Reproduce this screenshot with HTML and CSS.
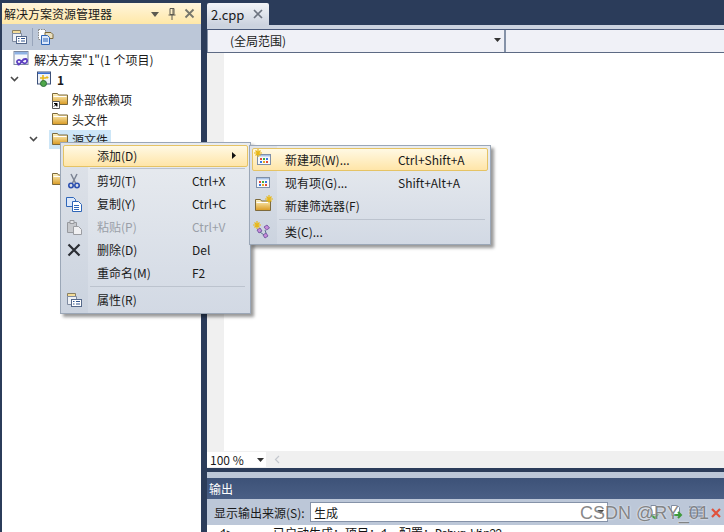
FILE: index.html
```html
<!DOCTYPE html>
<html lang="zh">
<head>
    <meta charset="UTF-8">
    <meta name="viewport" content="width=device-width, initial-scale=1.0">
    <title>解决方案资源管理器</title>
    <link rel="stylesheet" href="styles.css">
</head>
<body>
    <svg class="defs" width="0" height="0">
        <defs>
            <linearGradient id="fold" x1="0" y1="0" x2="0" y2="1">
                <stop offset="0" stop-color="#fff6c8"/>
                <stop offset="1" stop-color="#d99a22"/>
            </linearGradient>
            <symbol id="folder" viewBox="0 0 16 16">
                <path d="M.5 13.500V2.500h5l1 1.500h9v9.500z" fill="url(#fold)" stroke="#7d6a3c"/>
                <path d="M1.500 5.500h13" stroke="#fff" stroke-width="1"/>
            </symbol>
            <symbol id="grid" viewBox="0 0 16 16">
                <rect x="1.500" y="3.500" width="13" height="10" fill="#f8f9fc" stroke="#7e8fa8"/>
                <path d="M2 4h12v1.500H2z" fill="#a9c2e6"/>
                <path d="M4 7h2v2H4z" fill="#e0483c"/><path d="M7 7h2v2H7z" fill="#3fae3f"/><path d="M10 7h2v2h-2z" fill="#3a78e0"/>
                <path d="M4 10h2v2H4z" fill="#3a78e0"/><path d="M7 10h2v2H7z" fill="#e8a822"/><path d="M10 10h2v2h-2z" fill="#e0483c"/>
            </symbol>
            <symbol id="spark" viewBox="0 0 8 8">
                <path d="M4 0v8M0 4h8M1.500 1.500l5 5M6.500 1.500l-5 5" stroke="#e8b818" stroke-width="1.200"/>
            </symbol>
            <symbol id="props" viewBox="0 0 16 16">
                <path d="M1.500 1.500h8v3h-8z" fill="#f3dc9a" stroke="#8a8062"/>
                <path d="M1.500 4.500h9v8h-9z" fill="#eef1f6" stroke="#7f8ba0"/>
                <rect x="5.500" y="7.500" width="10" height="7" fill="#fff" stroke="#56698a"/>
                <path d="M7 9.500h1.500M10 9.500h4M7 12h1.500M10 12h4" stroke="#30548f"/>
            </symbol>
            <symbol id="copy" viewBox="0 0 16 16">
                <path d="M.5 1.500h7l2 2v7h-9z" fill="#dce8fa" stroke="#2f66b8"/>
                <path d="M6.500 5.500h6l3 3v7h-9z" fill="#fff" stroke="#2f66b8"/>
                <path d="M8 9.500h5M8 11.500h5M8 13.500h5" stroke="#2f66b8"/>
            </symbol>
        </defs>
    </svg>

    <div class="workspace">
        <aside class="explorer">
            <div class="explorer-title">
                <span class="explorer-name">解决方案资源管理器</span>
                <span class="title-btns">
                    <svg width="10" height="10" viewBox="0 0 10 10"><path d="M1 3h8L5 8z" fill="#5c5a50"/></svg>
                    <svg width="10" height="14" viewBox="0 0 10 14"><path d="M3 1.500h4v6H3zM1.500 8h7M5 8v5M6 2v5" stroke="#5c5a50" fill="none"/></svg>
                    <svg width="11" height="11" viewBox="0 0 11 11"><path d="M1.500 1.500l8 8M9.500 1.500l-8 8" stroke="#77776c" stroke-width="1.800"/></svg>
                </span>
            </div>
            <div class="explorer-tools">
                <svg class="ic16" viewBox="0 0 16 16"><use href="#props"/></svg>
                <span class="tool-sep"></span>
                <svg class="ic16" viewBox="0 0 16 16">
                    <path d="M.5 .5h7v10h-7z" fill="#fff" stroke="#888" stroke-dasharray="1.500 1"/>
                    <path d="M7 3.500h6l2 2v4H7z" fill="#eadfbe" stroke="#7d6a3c"/>
                    <path d="M3.500 6.500h6l2 2v7h-8z" fill="#dce8fa" stroke="#2f66b8"/>
                    <path d="M5 10h5M5 12h5" stroke="#2f66b8"/>
                </svg>
            </div>
            <div class="tree">
                <div class="tree-row lvl-0">
                    <svg class="ic-sol" viewBox="0 0 18 18">
                        <rect x="1" y="1.500" width="14" height="13" fill="#f6f8fc" stroke="#7c88a0"/>
                        <path d="M1.500 2h13v2.500h-13z" fill="#8fb2e4"/>
                        <path d="M5 13.500c-3-2.500 1-5 3-2.500s5 3.500 6 .5-3-3.500-5-.5-4 5-4 2.500z" fill="none" stroke="#5d3fc0" stroke-width="1.800"/>
                    </svg>
                    <span>解决方案"1"(1 个项目)</span>
                </div>
                <div class="tree-row lvl-1">
                    <svg class="chev" viewBox="0 0 9 6"><path d="M1 1l3.500 3.500L8 1" fill="none" stroke="#4a4a4a" stroke-width="1.600"/></svg>
                    <svg class="ic16" viewBox="0 0 16 16">
                        <rect x="1.500" y="1" width="13" height="12" fill="#eef2f8" stroke="#3c5078"/>
                        <path d="M2 1.500h12V3H2z" fill="#3a6fd0"/>
                        <path d="M7 4v6M4 7h6" stroke="#e8b818" stroke-width="1.600"/>
                        <path d="M11 5v3M9.500 6.500h3" stroke="#e8b818"/>
                        <circle cx="7.500" cy="12.500" r="3" fill="#4fa84a" stroke="#2d6e3a"/>
                    </svg>
                    <b>1</b>
                </div>
                <div class="tree-row lvl-2">
                    <span class="ic-wrap">
                        <svg class="ic16" viewBox="0 0 16 16"><use href="#folder"/></svg>
                        <svg class="shortcut-badge" viewBox="0 0 8 8"><path d="M.5 .5h7v7h-7z" fill="#fff" stroke="#555"/><path d="M2.500 6V3h3M2.500 3l3 3" stroke="#000" transform="rotate(90 4 4)"/></svg>
                    </span>
                    <span>外部依赖项</span>
                </div>
                <div class="tree-row lvl-2">
                    <svg class="ic16" viewBox="0 0 16 16"><use href="#folder"/></svg>
                    <span>头文件</span>
                </div>
                <div class="tree-row lvl-1b">
                    <svg class="chev" viewBox="0 0 9 6"><path d="M1 1l3.500 3.500L8 1" fill="none" stroke="#4a4a4a" stroke-width="1.600"/></svg>
                    <span class="tree-sel">
                        <svg class="ic16" viewBox="0 0 16 16"><use href="#folder"/></svg>
                        <span>源文件</span>
                    </span>
                </div>
                <div class="tree-row"></div>
                <div class="tree-row lvl-2">
                    <svg class="ic16" viewBox="0 0 16 16"><use href="#folder"/></svg>
                </div>
            </div>
        </aside>

        <main class="right-side">
            <div class="tabs">
                <div class="tab">
                    <span>2.cpp</span>
                    <svg width="10" height="10" viewBox="0 0 10 10"><path d="M1 1l8 8M9 1l-8 8" stroke="#6d7480" stroke-width="1.700"/></svg>
                </div>
            </div>
            <div class="tab-strip"></div>
            <div class="nav-bar">
                <div class="nav-scope">
                    <span>(全局范围)</span>
                    <svg width="7" height="4" viewBox="0 0 7 4"><path d="M0 0h7L3.500 4z" fill="#333"/></svg>
                </div>
                <div class="nav-member"></div>
            </div>
            <div class="editor">
                <div class="editor-margin"></div>
                <div class="editor-text"></div>
            </div>
            <div class="editor-foot">
                <div class="zoom-box">
                    <span>100 %</span>
                    <svg width="7" height="4" viewBox="0 0 7 4"><path d="M0 0h7L3.500 4z" fill="#333"/></svg>
                </div>
                <svg class="scroll-left" width="6" height="9" viewBox="0 0 6 9"><path d="M5 1L1.500 4.500 5 8" fill="none" stroke="#c4c8ce" stroke-width="1.200"/></svg>
            </div>
            <div class="splitter"></div>
            <div class="splitter-light"></div>
            <div class="output-title">输出</div>
            <div class="output-tools">
                <label>显示输出来源(S):</label>
                <div class="output-combo">
                    <span>生成</span>
                    <svg width="7" height="4" viewBox="0 0 7 4"><path d="M0 0h7L3.500 4z" fill="#333"/></svg>
                </div>
                <div class="output-icons">
                    <svg class="ic16" viewBox="0 0 16 16"><path d="M8 1.500h-5v9h5z" fill="#fff" stroke="#7f8ba0"/><path d="M3 11l4 3 3-4" fill="none" stroke="#3f9a3c" stroke-width="2"/></svg>
                    <svg class="ic16" viewBox="0 0 16 16"><path d="M3.500 1.500h6l2 2v8h-8z" fill="#fff" stroke="#7f8ba0"/><path d="M6 11h7M10 8l3 3-3 3" fill="none" stroke="#3f9a3c" stroke-width="2"/></svg>
                    <svg class="ic16" viewBox="0 0 16 16"><path d="M1 3h14M1 6h14M1 9h14M1 12h14" stroke="#5d6f8c"/></svg>
                    <svg class="ic16" viewBox="0 0 16 16"><path d="M4 5l8 8M12 5l-8 8" stroke="#e0513c" stroke-width="2.200"/></svg>
                </div>
            </div>
            <div class="output-text"><span class="latin">1&gt;</span><i class="dash"></i>已启动生成：项目：<span class="latin">1, </span>配置：<span class="latin">Debug Win32</span><i class="dash short"></i></div>
        </main>
    </div>

    <div class="menu menu-context">
        <div class="menu-row hot first">
            <span class="menu-icon"></span>
            <span class="menu-label">添加(D)</span>
            <svg class="menu-arrow" width="4" height="7" viewBox="0 0 4 7"><path d="M0 0l4 3.500L0 7z" fill="#111"/></svg>
        </div>
        <div class="menu-sep"></div>
        <div class="menu-row">
            <span class="menu-icon">
                <svg class="ic16" viewBox="0 0 16 16"><path d="M5 1l4.500 9M11 1L6.500 10" stroke="#7c8494" stroke-width="1.500"/><circle cx="5" cy="12.500" r="2.200" fill="none" stroke="#2b4fb0" stroke-width="1.600"/><circle cx="11" cy="12.500" r="2.200" fill="none" stroke="#2b4fb0" stroke-width="1.600"/></svg>
            </span>
            <span class="menu-label">剪切(T)</span>
            <span class="menu-key">Ctrl+X</span>
        </div>
        <div class="menu-row">
            <span class="menu-icon"><svg class="ic16" viewBox="0 0 16 16"><use href="#copy"/></svg></span>
            <span class="menu-label">复制(Y)</span>
            <span class="menu-key">Ctrl+C</span>
        </div>
        <div class="menu-row off">
            <span class="menu-icon">
                <svg class="ic16" viewBox="0 0 16 16"><path d="M1.500 3.500h9v10h-9z" fill="#c6c8cc" stroke="#97999e"/><path d="M4 1.500h4v3H4z" fill="#e2e3e6" stroke="#97999e"/><path d="M7.500 7.500h5l3 3v5h-8z" fill="#f0f0f2" stroke="#9b9da2"/></svg>
            </span>
            <span class="menu-label">粘贴(P)</span>
            <span class="menu-key">Ctrl+V</span>
        </div>
        <div class="menu-row">
            <span class="menu-icon"><svg class="ic16" viewBox="0 0 16 16"><path d="M2.500 2.500l11 11M13.500 2.500l-11 11" stroke="#2a2d33" stroke-width="2.200"/></svg></span>
            <span class="menu-label">删除(D)</span>
            <span class="menu-key">Del</span>
        </div>
        <div class="menu-row">
            <span class="menu-icon"></span>
            <span class="menu-label">重命名(M)</span>
            <span class="menu-key">F2</span>
        </div>
        <div class="menu-sep wide"></div>
        <div class="menu-row">
            <span class="menu-icon"><svg class="ic16" viewBox="0 0 16 16"><use href="#props"/></svg></span>
            <span class="menu-label">属性(R)</span>
        </div>
    </div>

    <div class="menu menu-add">
        <div class="menu-row hot first">
            <span class="menu-icon">
                <svg class="ic16" viewBox="0 0 16 16"><use href="#grid"/></svg>
                <svg class="spark" viewBox="0 0 8 8"><use href="#spark"/></svg>
            </span>
            <span class="menu-label">新建项(W)...</span>
            <span class="menu-key">Ctrl+Shift+A</span>
        </div>
        <div class="menu-row">
            <span class="menu-icon"><svg class="ic16" viewBox="0 0 16 16"><use href="#grid"/></svg></span>
            <span class="menu-label">现有项(G)...</span>
            <span class="menu-key">Shift+Alt+A</span>
        </div>
        <div class="menu-row">
            <span class="menu-icon">
                <svg class="ic16" viewBox="0 0 16 16"><use href="#folder"/></svg>
                <svg class="spark right" viewBox="0 0 8 8"><use href="#spark"/></svg>
            </span>
            <span class="menu-label">新建筛选器(F)</span>
        </div>
        <div class="menu-sep wide"></div>
        <div class="menu-row">
            <span class="menu-icon">
                <svg class="ic16" viewBox="0 0 16 16"><path d="M9 4l3-2 2.500 3-3 2zM2 7l3-2 2 3-3 2zM8 12l3-2 2 3-3 2z" fill="#c88ad8" stroke="#7a5fa8"/><path d="M5 9l4 3M10 7l1 3" stroke="#5d6f8c"/></svg>
                <svg class="spark" viewBox="0 0 8 8"><use href="#spark"/></svg>
            </span>
            <span class="menu-label">类(C)...</span>
        </div>
    </div>

    <div class="watermark">CSDN @RY_01</div>
</body>
</html>
```

FILE: styles.css
```css
html, body {
    margin: 0;
    height: 532px;
    overflow: hidden;
}
body {
    position: relative;
    width: 724px;
    background: #2b3c5a;
    font-family: "Noto Sans CJK SC", "Liberation Sans", sans-serif;
    font-size: 12px;
    color: #1a1a1a;
}
.defs {
    position: absolute;
}
svg {
    flex: none;
    display: block;
}
.ic16 {
    width: 16px;
    height: 16px;
}
.workspace {
    display: flex;
    height: 532px;
    padding: 3px 0 0 2px;
    box-sizing: border-box;
    gap: 6px;
}

/* left panel */
.explorer {
    width: 199px;
    flex: none;
    display: flex;
    flex-direction: column;
    background: #fff;
}
.explorer-title {
    height: 21px;
    display: flex;
    align-items: center;
    justify-content: space-between;
    padding: 0 6px 0 2px;
    background: linear-gradient(#fff5dc, #ffe8a8);
    border-radius: 2px 2px 0 0;
}
.title-btns {
    display: flex;
    align-items: center;
    gap: 7px;
}
.explorer-tools {
    height: 26px;
    display: flex;
    align-items: center;
    gap: 5px;
    padding-left: 9px;
    background: #bcc7d8;
}
.tool-sep {
    width: 1px;
    height: 18px;
    background: #98a5bb;
}
.tree-row {
    height: 20px;
    display: flex;
    align-items: center;
    gap: 4px;
    white-space: nowrap;
    position: relative;
    top: -1px;
}
.lvl-0 {
    padding-left: 11px;
    gap: 3px;
}
.ic-sol {
    width: 18px;
    height: 18px;
}
.lvl-1 {
    padding-left: 8px;
}
.lvl-1 .chev {
    margin-right: 13px;
}
.lvl-1 b {
    margin-left: 1px;
}
.lvl-1b {
    padding-left: 27px;
}
.lvl-1b .chev {
    margin-right: 7px;
}
.lvl-2 {
    padding-left: 50px;
}
.chev {
    width: 9px;
    height: 6px;
}
.tree-sel {
    display: flex;
    align-items: center;
    gap: 4px;
    height: 19px;
    padding: 0 3px;
    background: #cde6f7;
}
.ic-wrap {
    position: relative;
    width: 16px;
    height: 16px;
}
.shortcut-badge {
    position: absolute;
    left: 0;
    bottom: -2px;
    width: 8px;
    height: 8px;
}

/* editor side */
.right-side {
    flex: 1;
    min-width: 0;
    display: flex;
    flex-direction: column;
    overflow: hidden;
}
.right-side > * {
    flex: none;
}
.tabs {
    height: 22px;
    display: flex;
}
.tab {
    width: 62px;
    display: flex;
    align-items: center;
    gap: 9px;
    padding-left: 4px;
    box-sizing: border-box;
    font-size: 13px;
    background: linear-gradient(#f3f5f8, #ccd3df);
    border-radius: 2px 2px 0 0;
}
.tab-strip {
    height: 4px;
    background: #ccd3df;
    border-bottom: 1px solid #49597a;
}
.nav-bar {
    height: 23px;
    display: flex;
    gap: 2px;
    padding-left: 1px;
    background: #8592a8;
    box-sizing: border-box;
    border-bottom: 1px solid #5d6a84;
}
.nav-scope {
    width: 296px;
    display: flex;
    align-items: center;
    justify-content: space-between;
    padding: 0 3px 2px 22px;
    box-sizing: border-box;
    background: #f0f1f7;
}
.nav-member {
    flex: 1;
    background: #f0f1f7;
}
.editor {
    height: 398px;
    display: flex;
    background: #fff;
}
.editor-margin {
    width: 17px;
    background: #f0f0f0;
}
.editor-text {
    flex: 1;
}
.editor-foot {
    height: 17px;
    display: flex;
    align-items: center;
    gap: 7px;
    background: #f0f0f0;
}
.zoom-box {
    width: 59px;
    height: 15px;
    display: flex;
    align-items: center;
    justify-content: space-between;
    padding: 0 2px 0 3px;
    box-sizing: border-box;
    background: #fff;
}
.scroll-left {
    margin-left: 1px;
}
.splitter {
    height: 4px;
    background: #2b3c5a;
}
.splitter-light {
    height: 6px;
    background: #bcc7d8;
}
.output-title {
    height: 21px;
    line-height: 21px;
    padding-left: 2px;
    color: #fff;
    background: linear-gradient(#3d5278, #4a5f85);
}
.output-tools {
    height: 26px;
    display: flex;
    align-items: center;
    padding-left: 7px;
    background: #bcc7d8;
}
.output-tools label {
    width: 96px;
    flex: none;
    white-space: nowrap;
}
.output-combo {
    width: 298px;
    height: 20px;
    display: flex;
    align-items: center;
    justify-content: space-between;
    padding: 0 3px;
    box-sizing: border-box;
    background: #fff;
    border: 1px solid #8592a8;
}
.output-icons {
    display: flex;
    gap: 4px;
    margin-left: 40px;
}
.output-text {
    height: 8px;
    overflow: hidden;
    padding-left: 13px;
    background: #fff;
    font-family: "Noto Sans CJK SC", monospace;
    font-size: 12px;
    line-height: 15px;
    white-space: nowrap;
    color: #111;
}
.latin {
    font-family: "Liberation Mono", monospace;
    letter-spacing: -1.2px;
    white-space: pre;
}
.dash {
    display: inline-block;
    width: 35px;
    height: 1px;
    margin-right: 6px;
    background: #111;
    vertical-align: 4px;
}
.dash.short {
    width: 36px;
    margin: 0 0 0 6px;
}

/* popup menus */
.menu {
    position: absolute;
    box-sizing: border-box;
    padding: 2px;
    border: 1px solid #9ba7b7;
    background: linear-gradient(#e9ecf0, #d2d9e4);
    box-shadow: 3px 3px 3px rgba(0, 0, 0, 0.4);
}
.menu::before {
    content: "";
    position: absolute;
    top: 0;
    bottom: 0;
    left: 0;
    width: 27px;
    background: linear-gradient(#dfe3e9, #cbd3df);
}
.menu-context {
    left: 60px;
    top: 142px;
    width: 191px;
    height: 172px;
}
.menu-add {
    left: 249px;
    top: 145px;
    width: 242px;
    height: 100px;
}
.menu-row {
    position: relative;
    height: 23px;
    display: flex;
    align-items: center;
    white-space: nowrap;
    box-sizing: border-box;
}
.menu-context .first {
    height: 22px;
    margin-bottom: 1px;
    padding-bottom: 2px;
}
.menu-add .menu-row {
    padding-bottom: 1px;
}
.menu-row.hot {
    border: 1px solid #e5c365;
    border-radius: 2px;
    background: linear-gradient(#fff9e4, #ffe5a8);
}
.menu-row.off {
    color: #9a9fa8;
}
.menu-icon {
    position: relative;
    width: 34px;
    flex: none;
    display: flex;
    padding-left: 3px;
    box-sizing: border-box;
}
.hot .menu-icon {
    width: 33px;
}
.menu-add .menu-icon {
    width: 33px;
}
.menu-add .hot .menu-icon {
    width: 32px;
}
.spark {
    position: absolute;
    left: 1px;
    top: -2px;
    width: 8px;
    height: 8px;
}
.spark.right {
    left: 13px;
}
.menu-label {
    width: 95px;
    flex: none;
}
.menu-add .menu-label {
    width: 113px;
}
.menu-key {
    flex: none;
}
.menu-arrow {
    margin-left: 40px;
}
.menu-sep {
    position: relative;
    height: 1px;
    margin: 0 3px 0 27px;
    background: #bcc3ce;
}
.menu-sep.wide {
    margin-top: 2px;
    margin-bottom: 1px;
}
.menu-add .menu-sep.wide {
    margin-bottom: 0;
}
.watermark {
    position: absolute;
    left: 580px;
    top: 502px;
    font-family: "Liberation Sans", sans-serif;
    font-size: 18px;
    line-height: 22px;
    white-space: nowrap;
    color: rgba(105, 105, 105, 0.8);
    text-shadow: 0 0 2px #fff;
}
```
